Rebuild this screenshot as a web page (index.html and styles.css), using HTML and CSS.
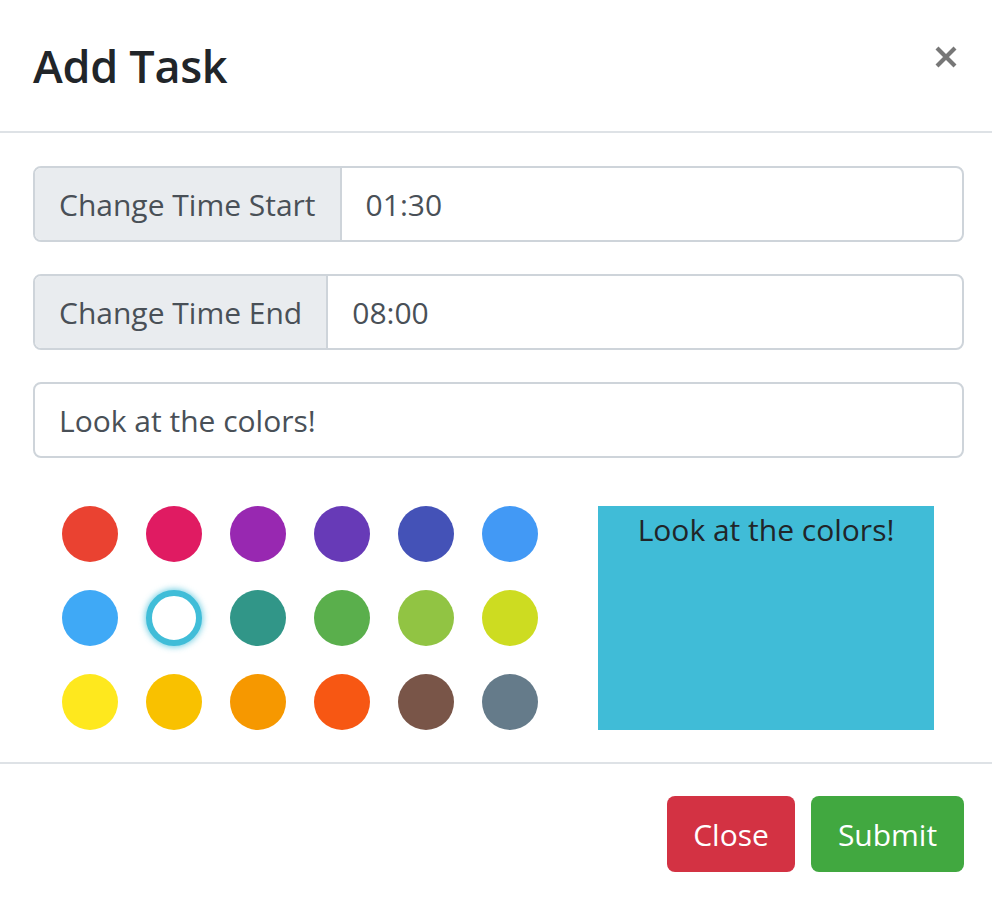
FILE: index.html
```html
<!DOCTYPE html>
<html lang="en">
<head>
<meta charset="utf-8">
<title>Add Task</title>
<link rel="stylesheet" href="styles.css">
</head>
<body>
<div class="modal">
  <div class="modal-header">
    <h4 class="modal-title">Add Task</h4>
    <button class="close" type="button" aria-label="Close">
      <svg width="24" height="24" viewBox="0 0 24 24"><path d="M3 3 L21 21 M21 3 L3 21" stroke="currentColor" stroke-width="4.2" stroke-linecap="butt"/></svg>
    </button>
  </div>
  <div class="modal-body">
    <div class="input-group">
      <span class="input-group-text">Change Time Start</span>
      <span class="form-control">01:30</span>
    </div>
    <div class="input-group">
      <span class="input-group-text">Change Time End</span>
      <span class="form-control">08:00</span>
    </div>
    <div class="input-group single">
      <span class="form-control">Look at the colors!</span>
    </div>
    <div class="color-row">
      <div class="palette">
        <span class="dot c-red"></span>
        <span class="dot c-pink"></span>
        <span class="dot c-purple"></span>
        <span class="dot c-dpurple"></span>
        <span class="dot c-indigo"></span>
        <span class="dot c-blue"></span>
        <span class="dot c-lblue"></span>
        <span class="dot selected"></span>
        <span class="dot c-teal"></span>
        <span class="dot c-green"></span>
        <span class="dot c-lgreen"></span>
        <span class="dot c-lime"></span>
        <span class="dot c-yellow"></span>
        <span class="dot c-amber"></span>
        <span class="dot c-orange"></span>
        <span class="dot c-dorange"></span>
        <span class="dot c-brown"></span>
        <span class="dot c-bgrey"></span>
      </div>
      <div class="preview">Look at the colors!</div>
    </div>
  </div>
  <div class="modal-footer">
    <button class="btn btn-danger" type="button">Close</button>
    <button class="btn btn-success" type="button">Submit</button>
  </div>
</div>
</body>
</html>
```

FILE: styles.css
```css
html, body {
  margin: 0;
  padding: 0;
  background: #ffffff;
}
body {
  font-family: "Open Sans", "Noto Sans", sans-serif;
  color: #212529;
}
.modal {
  width: 992px;
}
.modal-header {
  height: 133px;
  box-sizing: border-box;
  padding: 0 28px 0 33px;
  display: flex;
  align-items: center;
  justify-content: space-between;
  border-bottom: 2px solid #dee2e6;
}
.modal-title {
  margin: 0 0 0 0;
  font-size: 45px;
  font-weight: 600;
  color: #212529;
  line-height: 1;
  letter-spacing: -0.3px;
}
.close {
  border: 0;
  background: transparent;
  padding: 0;
  margin: 0 6px 17px 0;
  color: #777777;
  width: 24px;
  height: 24px;
  display: flex;
}
.modal-body {
  padding: 33px 28px 32px 33px;
}
.input-group {
  display: flex;
  height: 76px;
  margin-bottom: 32px;
  border: 2px solid #ced4da;
  border-radius: 8px;
  box-sizing: border-box;
  overflow: hidden;
  font-size: 30px;
  color: #495057;
}
.input-group-text {
  display: flex;
  align-items: center;
  padding: 0 24px;
  background: #e9ecef;
  border-right: 2px solid #ced4da;
  white-space: nowrap;
}
.form-control {
  display: flex;
  align-items: center;
  padding: 0 24px;
  flex: 1;
}
.input-group.single {
  margin-bottom: 48px;
}
.color-row {
  display: flex;
  align-items: flex-start;
}
.palette {
  margin-left: 29px;
  display: grid;
  grid-template-columns: repeat(6, 56px);
  grid-auto-rows: 56px;
  gap: 28px;
}
.dot {
  width: 56px;
  height: 56px;
  border-radius: 50%;
  display: block;
  box-sizing: border-box;
}
.dot.selected {
  background: #ffffff;
  border: 6px solid #40bdd8;
  box-shadow: 0 0 6px 1px rgba(64, 189, 216, 0.75);
}
.c-red { background: #ea4231; }
.c-pink { background: #e01b62; }
.c-purple { background: #9828b1; }
.c-dpurple { background: #673ab7; }
.c-indigo { background: #4452b7; }
.c-blue { background: #4299f5; }
.c-lblue { background: #3fa9f6; }
.c-teal { background: #319688; }
.c-green { background: #5aaf4c; }
.c-lgreen { background: #91c443; }
.c-lime { background: #cddc21; }
.c-yellow { background: #fee81e; }
.c-amber { background: #f9c100; }
.c-orange { background: #f69800; }
.c-dorange { background: #f75713; }
.c-brown { background: #795548; }
.c-bgrey { background: #657b8a; }
.preview {
  margin-left: 60px;
  width: 336px;
  height: 224px;
  background: #40bcd7;
  text-align: center;
  font-size: 30px;
  line-height: 48px;
  color: #212529;
}
.modal-footer {
  border-top: 2px solid #dee2e6;
  padding: 32px 28px 32px 33px;
  display: flex;
  justify-content: flex-end;
  gap: 16px;
}
.btn {
  height: 76px;
  border: 0;
  border-radius: 8px;
  color: #ffffff;
  font-family: "Open Sans", "Noto Sans", sans-serif;
  font-size: 30px;
  padding: 0;
}
.btn-danger {
  width: 128px;
  background: #d33243;
}
.btn-success {
  width: 153px;
  background: #41a840;
}
```
